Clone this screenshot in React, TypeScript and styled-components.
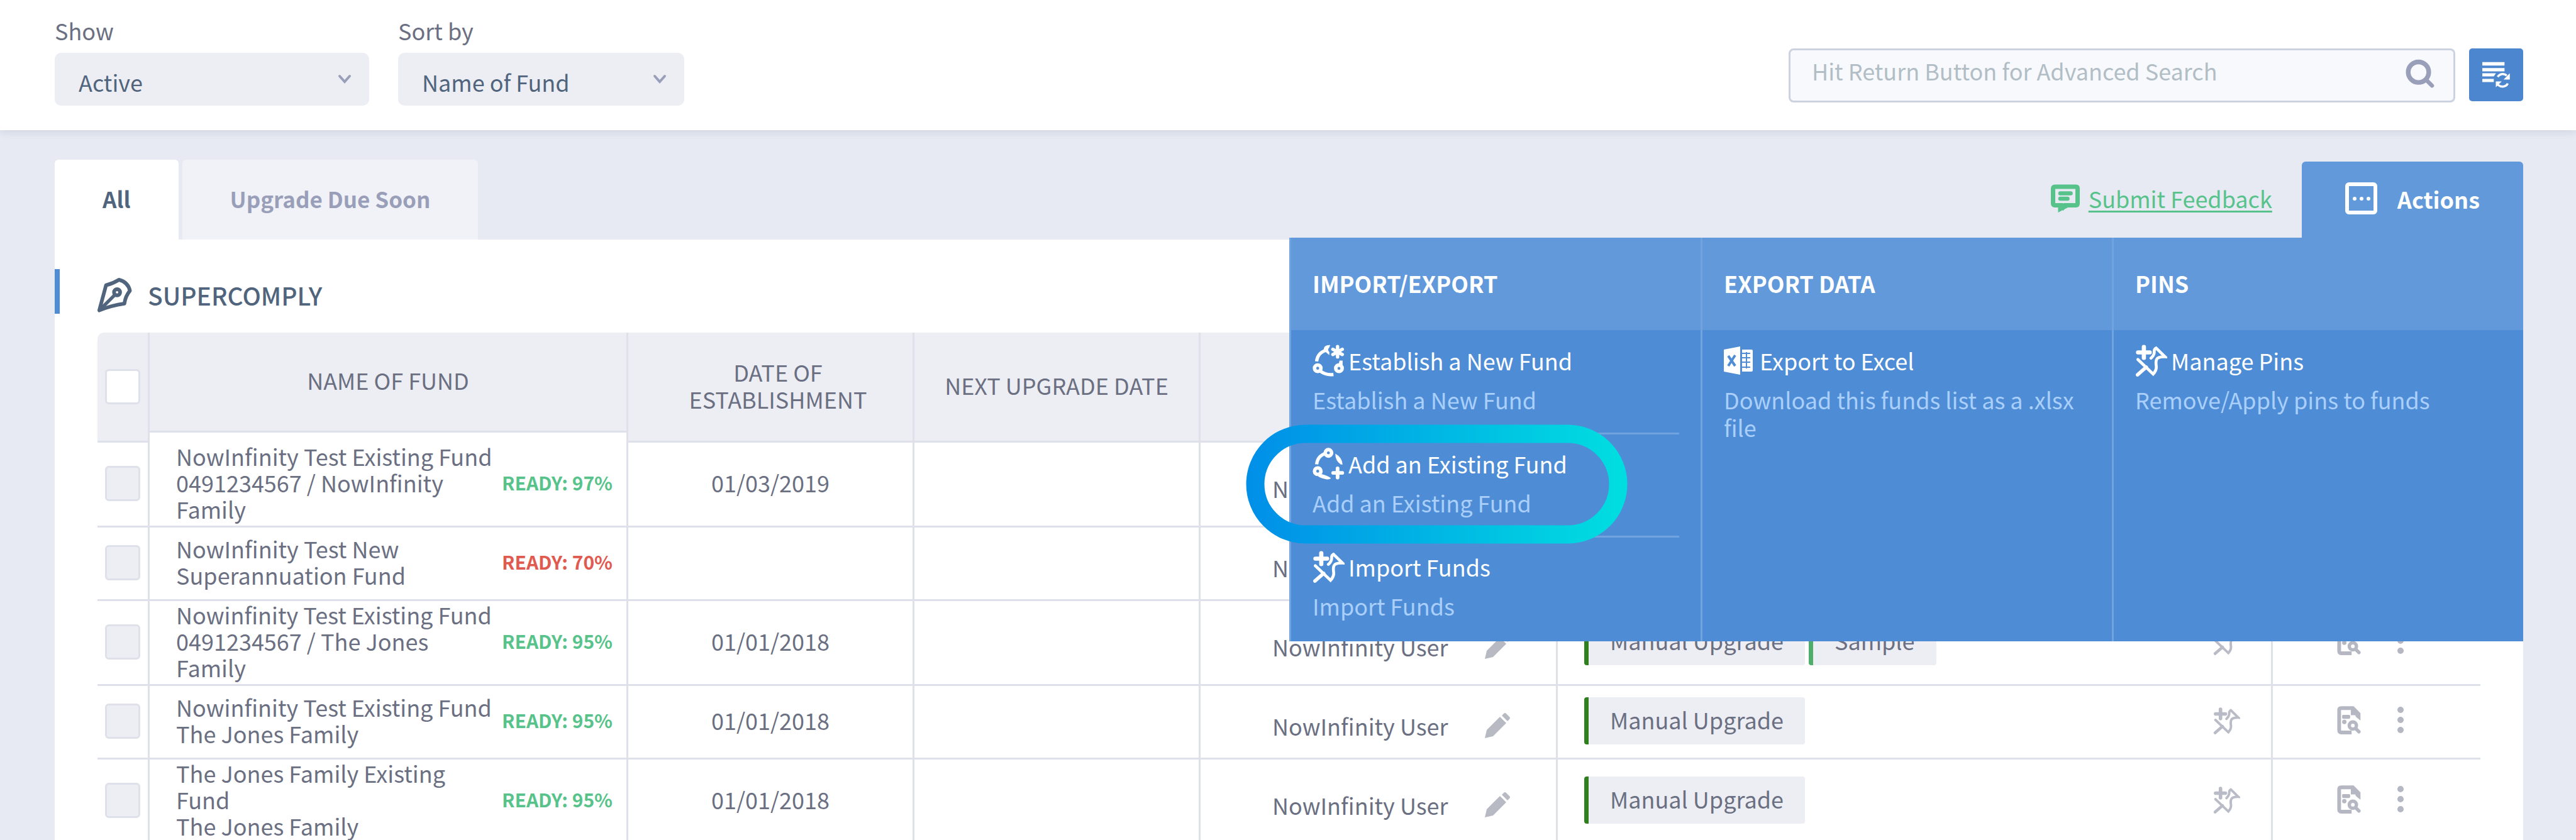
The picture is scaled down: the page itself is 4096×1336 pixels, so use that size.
import React from "react";
import styled, { createGlobalStyle } from "styled-components";

const ink = "#6b6f82";
const slate = "#50657d";
const line = "#dee1ea";
const fog = "#edeef4";
const muted = "#9a9fb9";
const blue = "#4e8dd6";
const blueLight = "#6299da";
const green = "#57c38b";

const Global = createGlobalStyle`
  *, *::before, *::after { box-sizing: border-box; }
  body { margin: 0; background: #e7eaf3; }
  body, button, input, select {
    font-family: "Noto Sans CJK SC", "Noto Sans", sans-serif;
    font-size: 36px;
    line-height: 44px;
    color: ${ink};
  }
  svg { display: block; flex: none; }
`;

const Page = styled.div`
  display: flex;
  flex-direction: column;
  height: 100vh;
  overflow: hidden;
`;

/* ---------- top bar ---------- */

const TopBar = styled.header`
  display: flex;
  justify-content: space-between;
  align-items: flex-start;
  flex: none;
  padding: 26px 84px 39px 87px;
  background: #fff;
  box-shadow: 0 4px 12px rgba(60, 70, 100, 0.12);
`;

const Filters = styled.div`
  display: flex;
  gap: 46px;
`;

const Field = styled.div<{ $width: number }>`
  display: flex;
  flex-direction: column;
  gap: 14px;
  width: ${(p) => p.$width}px;
`;

const SelectBox = styled.div`
  display: grid;
  align-items: center;
  svg {
    grid-area: 1 / 1;
    justify-self: end;
    margin-right: 28px;
    pointer-events: none;
  }
`;

const Select = styled.select`
  grid-area: 1 / 1;
  width: 100%;
  height: 84px;
  padding: 8px 60px 0 38px;
  border: 0;
  border-radius: 10px;
  appearance: none;
  background: ${fog};
  color: ${slate};
`;

const SearchArea = styled.form`
  display: flex;
  gap: 22px;
  padding-top: 51px;
`;

const SearchBox = styled.label`
  display: flex;
  align-items: flex-start;
  justify-content: space-between;
  width: 1060px;
  height: 86px;
  padding: 10px 30px 0 34px;
  border: 3px solid #cdd2e0;
  border-radius: 8px;
  background: #f8f9fd;
  svg {
    margin-top: 4px;
  }
`;

const SearchInput = styled.input`
  flex: 1;
  min-width: 0;
  height: 44px;
  padding: 0;
  border: 0;
  outline: 0;
  background: transparent;
  &::placeholder {
    color: #b1bec5;
    opacity: 1;
  }
`;

const SquareButton = styled.button`
  display: grid;
  place-items: center;
  width: 86px;
  height: 84px;
  padding: 0;
  border: 0;
  border-radius: 5px;
  background: #4b86cf;
`;

/* ---------- tabs ---------- */

const Main = styled.main`
  display: flex;
  flex-direction: column;
  flex: 1;
  padding: 47px 84px 0 87px;
`;

const TabRow = styled.div`
  display: flex;
  justify-content: space-between;
  flex: none;
  height: 127px;
`;

const Tabs = styled.div`
  display: flex;
  gap: 6px;
`;

const Tab = styled.button<{ $active?: boolean }>`
  padding: 0 76px 4px;
  border: 0;
  border-radius: 6px 6px 0 0;
  background: ${(p) => (p.$active ? "#fff" : "#f1f2f8")};
  color: ${(p) => (p.$active ? slate : muted)};
  font-size: 35px;
  font-weight: 700;
`;

const TabTools = styled.div`
  display: flex;
  align-items: center;
  gap: 47px;
  height: 124px;
`;

const Feedback = styled.a`
  display: flex;
  align-items: center;
  gap: 14px;
  padding-bottom: 2px;
  color: ${green};
  text-decoration: underline;
  text-decoration-thickness: 3px;
  text-underline-offset: 4px;
`;

const ActionsWrap = styled.div`
  position: relative;
  align-self: flex-end;
  z-index: 2;
`;

const ActionsButton = styled.button`
  display: flex;
  align-items: center;
  gap: 32px;
  height: 121px;
  padding: 0 69px 4px;
  border: 0;
  border-radius: 6px 6px 0 0;
  background: ${blueLight};
  color: #fff;
  font-weight: 700;
`;

/* ---------- actions menu ---------- */

const Menu = styled.div`
  position: absolute;
  top: 100%;
  right: 0;
  display: grid;
  grid-template-columns: repeat(3, 654px);
  color: #fff;
  background: ${blue};
`;

const MenuColumn = styled.section`
  border-left: 3px solid rgba(255, 255, 255, 0.2);
  background: ${blue};
  background-clip: padding-box;
`;

const MenuHeading = styled.h2`
  display: flex;
  align-items: center;
  height: 147px;
  margin: 0;
  padding: 0 34px 4px;
  background: ${blueLight};
  font-size: 36px;
  font-weight: 700;
`;

const MenuList = styled.ul`
  margin: 0;
  padding: 2px 34px;
  min-height: 495px;
  list-style: none;
`;

const MenuItem = styled.li`
  position: relative;
  padding: 24px 0 31px;
  border-bottom: 3px solid rgba(255, 255, 255, 0.2);
  &:last-child {
    border-bottom: 0;
  }
`;

const MenuAction = styled.button`
  display: grid;
  grid-template-columns: 57px auto;
  grid-template-rows: 44px;
  align-items: center;
  padding: 0;
  border: 0;
  background: none;
  color: #fff;
  text-align: left;
  svg {
    height: 51px;
    width: 51px;
  }
`;

const MenuNote = styled.p`
  margin: 18px 0 0;
  color: #a9cffa;
`;

const Ring = styled.svg`
  position: absolute;
  top: -16px;
  left: -106px;
  pointer-events: none;
`;

/* ---------- panel and table ---------- */

const Panel = styled.section`
  flex: 1;
  padding-top: 47px;
  background: #fff;
`;

const PanelTitle = styled.h1`
  display: flex;
  align-items: center;
  gap: 25px;
  height: 71px;
  margin: 0 0 30px;
  padding: 11px 0 0 59px;
  border-left: 8px solid ${blue};
  color: ${slate};
  font-size: 39px;
  font-weight: 500;
`;

const TableWrap = styled.div`
  padding: 0 68px;
`;

const Table = styled.table`
  width: 100%;
  table-layout: fixed;
  border-collapse: separate;
  border-spacing: 0;
  line-height: 43px;
`;

const Th = styled.th<{ $shift?: boolean }>`
  padding: 0 30px 5px ${(p) => (p.$shift ? 54 : 30)}px;
  border-right: 3px solid ${line};
  border-bottom: 3px solid ${line};
  background: ${fog};
  font-weight: 400;
  &:first-child {
    padding: 0;
    border-radius: 10px 0 0 0;
  }
`;

const HeadRow = styled.tr`
  height: 159px;
`;

const SpacerRow = styled.tr`
  height: 16px;
`;

const Spacer = styled.td`
  padding: 0;
  border-right: 3px solid ${line};
`;

const Row = styled.tr`
  height: 117px;
`;

const Td = styled.td`
  padding: 0 0 6px;
  border-right: 3px solid ${line};
  border-bottom: 3px solid ${line};
  text-align: center;
  &:first-child {
    padding-bottom: 2px;
  }
  &:last-child {
    border-right: 0;
  }
`;

const Tick = styled.input<{ $head?: boolean }>`
  display: block;
  appearance: none;
  width: 56px;
  height: 56px;
  margin: 0 auto;
  border: 3px solid ${line};
  border-radius: 6px;
  background: ${(p) => (p.$head ? "#fff" : fog)};
`;

const FundCell = styled.div`
  display: flex;
  align-items: center;
  justify-content: space-between;
  padding: 0 22px 0 42px;
  text-align: left;
  line-height: 42px;
`;

const FundName = styled.div`
  width: 516px;
`;

const Ready = styled.span<{ $low?: boolean }>`
  flex: none;
  color: ${(p) => (p.$low ? "#e05a50" : green)};
  font-size: 30px;
  font-weight: 700;
`;

const UserCell = styled.div`
  display: flex;
  align-items: center;
  justify-content: space-between;
  padding: 18px 73px 0 114px;
`;

const TagCell = styled.div`
  display: flex;
  align-items: center;
  gap: 6px;
  padding: 2px 49px 0 42px;
`;

const Tag = styled.span<{ $bright?: boolean }>`
  height: 75px;
  padding: 14px 34px;
  border-left: 7px solid ${(p) => (p.$bright ? "#4fae6b" : "#2f7f1f")};
  border-radius: 4px;
  background: ${fog};
`;

const RowTools = styled.div`
  display: flex;
  align-items: center;
  gap: 57px;
  padding-left: 101px;
`;

const IconButton = styled.button<{ $end?: boolean }>`
  display: block;
  padding: 0;
  border: 0;
  margin-left: ${(p) => (p.$end ? "auto" : "0")};
  background: none;
`;

/* ---------- icons ---------- */

const Chevron = () => (
  <svg width="22" height="16" viewBox="0 0 22 16" fill="none" stroke={muted} strokeWidth="4" strokeLinecap="round">
    <path d="M3 3l8 9 8-9" />
  </svg>
);

const SearchIcon = () => (
  <svg width="46" height="46" viewBox="84 106 186 186" fill="none" stroke={muted} strokeLinecap="round">
    <circle cx="167" cy="190" r="66" strokeWidth="30" />
    <path d="M220 243l34 34" strokeWidth="26" />
  </svg>
);

const ListRefreshIcon = () => (
  <svg width="44" height="42" viewBox="573 116 178 170" fill="#fff">
    <path d="M573 119h143v22H573zM573 157h143v22H573zM573 191h88l-14 20h-74zM573 227h74v21h-74z" />
    <path d="M672 214q12-18 34-18 14 0 24 10" fill="none" stroke="#fff" strokeWidth="14" />
    <path d="M750 191v40h-40zM660 243h38l-38 38z" />
    <path d="M674 266q14 12 32 11 22-2 31-20" fill="none" stroke="#fff" strokeWidth="14" />
  </svg>
);

const FeedbackIcon = () => (
  <svg width="46" height="45" viewBox="62 70 184 180" fill="none" stroke={green}>
    <path d="M132 204l9 12 10-12h69q12 0 12-12V98q0-12-12-12H88q-12 0-12 12v94q0 12 12 12z" strokeWidth="28" />
    <path d="M108 212v38l66-34z" fill={green} stroke="none" />
    <path d="M122 128h66M122 162h46" strokeWidth="26" strokeLinecap="round" />
  </svg>
);

const DotsBoxIcon = () => (
  <svg width="51" height="51" viewBox="0 0 51 51" fill="#fff">
    <rect x="3" y="3" width="45" height="45" rx="3" fill="none" stroke="#fff" strokeWidth="6" />
    <circle cx="15" cy="26" r="3" />
    <circle cx="26" cy="26" r="3" />
    <circle cx="37" cy="26" r="3" />
  </svg>
);

const PenIcon = () => (
  <svg width="56" height="57" viewBox="76 94 230 230" fill="none" stroke={slate} strokeLinejoin="round">
    <path d="M92 308L136 144q46-12 84-36 60 16 72 72-30 36-36 84Q170 276 92 308z" strokeWidth="24" />
    <circle cx="208" cy="190" r="20" strokeWidth="24" />
    <path d="M196 204L98 302" strokeWidth="22" />
  </svg>
);

const NewFundIcon = () => (
  <svg viewBox="62 43 208 210" fill="none" stroke="#fff">
    <path d="M88 153q6-58 66-74" strokeWidth="22" />
    <path d="M177 46q-44-2-44 34l38 32V92q-16-14 0-30z" fill="#fff" stroke="none" />
    <path d="M225 56v68M194 74l62 34M256 74l-62 34" strokeWidth="22" strokeLinecap="round" />
    <circle cx="234" cy="198" r="21" strokeWidth="23" />
    <path d="M238 148h20v50h-38q14-24 18-50z" fill="#fff" stroke="none" />
    <circle cx="234" cy="198" r="9" fill={blue} stroke="none" />
    <circle cx="95" cy="198" r="21" strokeWidth="23" />
    <path d="M112 217q36 28 86 22" strokeWidth="22" />
  </svg>
);

const AddFundIcon = () => (
  <svg viewBox="62 718 208 210" fill="none" stroke="#fff">
    <path d="M88 827q6-58 66-74" strokeWidth="22" />
    <circle cx="165" cy="752" r="21" strokeWidth="23" />
    <circle cx="95" cy="872" r="21" strokeWidth="23" />
    <path d="M225 854v60M196 883h60" strokeWidth="24" strokeLinecap="round" />
    <path d="M210 757q44 24 48 71h-12q-36-24-36-71zM106 890q44 4 76 28-8 10-28 8-36-8-56-20z" fill="#fff" stroke="none" />
  </svg>
);

const PinIcon = ({ color = "#fff", size = 51 }: { color?: string; size?: number }) => (
  <svg width={size} height={size} viewBox="56 82 174 176" fill="none" stroke={color} strokeLinecap="round">
    <path d="M103 95v60M71 125h64" strokeWidth="23" />
    <path d="M70 164l84 80q20-22 17-44-6-38 12-46 14-6 36-5l-49-48q-12 6-10 22 0 16-18 34" strokeWidth="16" />
    <path d="M116 206l-48 42" strokeWidth="19" />
  </svg>
);

const ExcelIcon = () => (
  <svg viewBox="0 0 51 51" fill="#fff">
    <path d="M0 8l26-5v45L0 43zM29 8h15q2 0 2 2v31q0 2-2 2H29z" />
    <path d="M7 18l11 16M18 17L7 34" stroke={blue} strokeWidth="4" />
    <path d="M29 14h13M29 21h13M29 28h13M29 36h13M36 12v26" stroke={blue} strokeWidth="2" />
  </svg>
);

const PencilIcon = () => (
  <svg width="40" height="40" viewBox="0 0 40 40" fill="#b7bac3">
    <path d="M0 40l3-13L24 6l10 10-21 21zM27 4l3-3q2-2 4 0l5 5q2 2 0 4l-3 3z" />
  </svg>
);

const DocSearchIcon = () => (
  <svg width="40" height="45" viewBox="848 53 152 182" fill="#b5b8c2">
    <path d="M940 66h-66q-13 0-13 13v130q0 14 14 14h66" fill="none" stroke="#b5b8c2" strokeWidth="24" />
    <path d="M936 54h18l44 44v48l-28-22-6-12h-28zM880 116q0-6 8-6h36q8 0 8 12 0 13-8 13h-36q-8 0-8-6z" />
    <circle cx="894" cy="155" r="14" />
    <circle cx="949" cy="178" r="23" fill="none" stroke="#b5b8c2" strokeWidth="22" />
    <path d="M970 200l18 18" stroke="#b5b8c2" strokeWidth="22" strokeLinecap="round" />
  </svg>
);

const MoreIcon = () => (
  <svg width="10" height="42" viewBox="0 0 10 42" fill="#b5b8c2">
    <circle cx="5" cy="5" r="5" />
    <circle cx="5" cy="21" r="5" />
    <circle cx="5" cy="37" r="5" />
  </svg>
);

/* ---------- data ---------- */

type Fund = {
  name: string[];
  ready: number;
  date: string;
  tags: string[];
};

const funds: Fund[] = [
  { name: ["NowInfinity Test Existing Fund", "0491234567 / NowInfinity Family"], ready: 97, date: "01/03/2019", tags: [] },
  { name: ["NowInfinity Test New Superannuation Fund"], ready: 70, date: "", tags: [] },
  { name: ["Nowinfinity Test Existing Fund", "0491234567 / The Jones Family"], ready: 95, date: "01/01/2018", tags: ["Manual Upgrade", "Sample"] },
  { name: ["Nowinfinity Test Existing Fund", "The Jones Family"], ready: 95, date: "01/01/2018", tags: ["Manual Upgrade"] },
  { name: ["The Jones Family Existing Fund", "The Jones Family"], ready: 95, date: "01/01/2018", tags: ["Manual Upgrade"] },
];

const menu = [
  {
    heading: "IMPORT/EXPORT",
    items: [
      { icon: <NewFundIcon />, title: "Establish a New Fund", note: "Establish a New Fund" },
      { icon: <AddFundIcon />, title: "Add an Existing Fund", note: "Add an Existing Fund", ring: true },
      { icon: <PinIcon />, title: "Import Funds", note: "Import Funds" },
    ],
  },
  {
    heading: "EXPORT DATA",
    items: [{ icon: <ExcelIcon />, title: "Export to Excel", note: "Download this funds list as a .xlsx file" }],
  },
  {
    heading: "PINS",
    items: [{ icon: <PinIcon />, title: "Manage Pins", note: "Remove/Apply pins to funds" }],
  },
];

const HighlightRing = () => (
  <Ring width="607" height="190" viewBox="0 0 607 190" fill="none">
    <defs>
      <linearGradient id="ring" x1="0" x2="1" y1="0" y2="0">
        <stop offset="0" stopColor="#0090e8" />
        <stop offset="1" stopColor="#00dde0" />
      </linearGradient>
    </defs>
    <rect x="15" y="15" width="577" height="160" rx="80" stroke="url(#ring)" strokeWidth="29" />
  </Ring>
);

const ActionsMenu = () => (
  <Menu>
    {menu.map((column) => (
      <MenuColumn key={column.heading}>
        <MenuHeading>{column.heading}</MenuHeading>
        <MenuList>
          {column.items.map((item) => (
            <MenuItem key={item.title}>
              <MenuAction type="button">
                {item.icon}
                <span>{item.title}</span>
              </MenuAction>
              <MenuNote>{item.note}</MenuNote>
              {"ring" in item && <HighlightRing />}
            </MenuItem>
          ))}
        </MenuList>
      </MenuColumn>
    ))}
  </Menu>
);

const FundTable = () => (
  <Table>
    <colgroup>
      <col width="83" />
      <col width="761" />
      <col width="455" />
      <col width="455" />
      <col width="568" />
      <col />
      <col width="330" />
    </colgroup>
    <thead>
      <HeadRow>
        <Th rowSpan={2}>
          <Tick type="checkbox" aria-label="Select all" $head />
        </Th>
        <Th>NAME OF FUND</Th>
        <Th rowSpan={2} $shift>
          DATE OF ESTABLISHMENT
        </Th>
        <Th rowSpan={2}>NEXT UPGRADE DATE</Th>
        <Th rowSpan={2} />
        <Th rowSpan={2} />
        <Th rowSpan={2} />
      </HeadRow>
      <SpacerRow>
        <Spacer />
      </SpacerRow>
    </thead>
    <tbody>
      {funds.map((fund, index) => (
        <Row key={index}>
          <Td>
            <Tick type="checkbox" aria-label={fund.name[0]} />
          </Td>
          <Td>
            <FundCell>
              <FundName>
                {fund.name.map((part) => (
                  <div key={part}>{part}</div>
                ))}
              </FundName>
              <Ready $low={fund.ready < 80}>READY: {fund.ready}%</Ready>
            </FundCell>
          </Td>
          <Td>{fund.date}</Td>
          <Td />
          <Td>
            <UserCell>
              NowInfinity User
              <IconButton type="button" aria-label="Edit user">
                <PencilIcon />
              </IconButton>
            </UserCell>
          </Td>
          <Td>
            <TagCell>
              {fund.tags.map((tag) => (
                <Tag key={tag} $bright={tag === "Sample"}>
                  {tag}
                </Tag>
              ))}
              <IconButton type="button" aria-label="Pin" $end>
                <PinIcon color="#b9bcc6" size={43} />
              </IconButton>
            </TagCell>
          </Td>
          <Td>
            <RowTools>
              <IconButton type="button" aria-label="View documents">
                <DocSearchIcon />
              </IconButton>
              <IconButton type="button" aria-label="More">
                <MoreIcon />
              </IconButton>
            </RowTools>
          </Td>
        </Row>
      ))}
    </tbody>
  </Table>
);

export default function App() {
  return (
    <Page>
      <Global />
      <TopBar>
        <Filters>
          <Field $width={500}>
            <label htmlFor="show">Show</label>
            <SelectBox>
              <Select id="show">
                <option>Active</option>
              </Select>
              <Chevron />
            </SelectBox>
          </Field>
          <Field $width={455}>
            <label htmlFor="sort">Sort by</label>
            <SelectBox>
              <Select id="sort">
                <option>Name of Fund</option>
              </Select>
              <Chevron />
            </SelectBox>
          </Field>
        </Filters>
        <SearchArea>
          <SearchBox>
            <SearchInput type="text" aria-label="Search" placeholder="Hit Return Button for Advanced Search" />
            <SearchIcon />
          </SearchBox>
          <SquareButton type="button" aria-label="Refresh list">
            <ListRefreshIcon />
          </SquareButton>
        </SearchArea>
      </TopBar>
      <Main>
        <TabRow>
          <Tabs>
            <Tab type="button" $active>
              All
            </Tab>
            <Tab type="button">Upgrade Due Soon</Tab>
          </Tabs>
          <TabTools>
            <Feedback href="#feedback">
              <FeedbackIcon />
              Submit Feedback
            </Feedback>
            <ActionsWrap>
              <ActionsButton type="button">
                <DotsBoxIcon />
                Actions
              </ActionsButton>
              <ActionsMenu />
            </ActionsWrap>
          </TabTools>
        </TabRow>
        <Panel>
          <PanelTitle>
            <PenIcon />
            SUPERCOMPLY
          </PanelTitle>
          <TableWrap>
            <FundTable />
          </TableWrap>
        </Panel>
      </Main>
    </Page>
  );
}
